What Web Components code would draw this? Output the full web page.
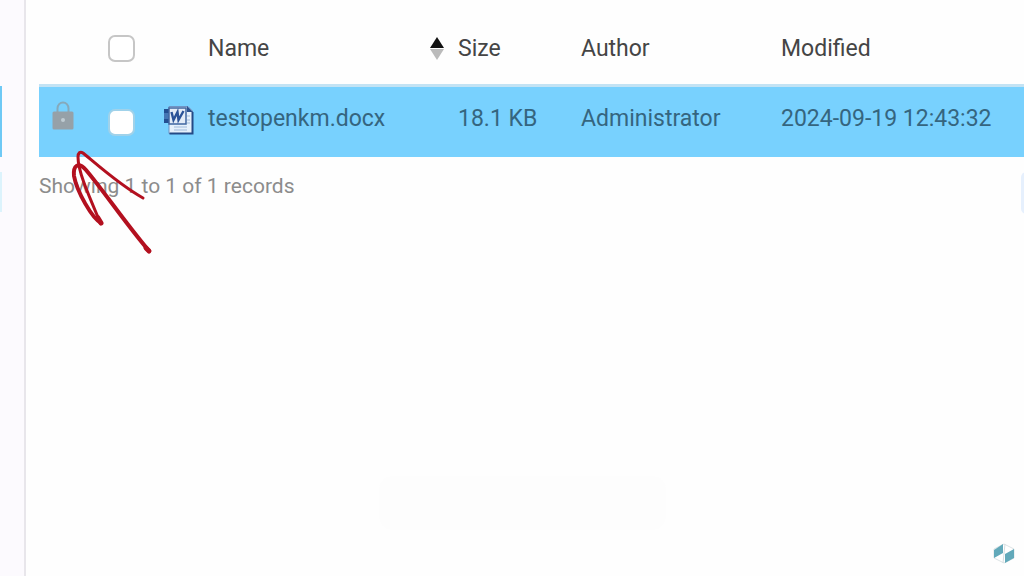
<!DOCTYPE html>
<html lang="en">
<head>
<meta charset="utf-8">
<title>Documents</title>
<style>
    body {
        margin: 0;
        background: #fefefe;
        font-family: Roboto, "Liberation Sans", sans-serif;
        overflow: hidden;
    }
</style>
</head>
<body>
<document-browser>
    <side-strip slot="side"></side-strip>
    <file-table></file-table>
    <records-info>Showing 1 to 1 of 1 records</records-info>
    <hand-arrow slot="overlay"></hand-arrow>
    <corner-logo slot="overlay"></corner-logo>
</document-browser>

<script>
class DocumentBrowser extends HTMLElement {
    constructor() {
        super();
        this.attachShadow({ mode: 'open' });
    }

    connectedCallback() {
        this.shadowRoot.innerHTML = `
            <style>
                :host {
                    display: flex;
                    position: relative;
                    min-height: 100vh;
                }
                main {
                    flex: 1;
                    min-width: 0;
                    padding-left: 13px;
                }
                .ghost {
                    position: absolute;
                    left: 37%;
                    bottom: 46px;
                    width: 28%;
                    height: 54px;
                    border-radius: 14px;
                    background: #fdfdfd;
                }
                .edge {
                    position: absolute;
                    top: 172px;
                    right: -8px;
                    width: 11px;
                    height: 42px;
                    border-radius: 6px;
                    background: #e6f0fd;
                }
            </style>
            <slot name="side"></slot>
            <main><slot></slot></main>
            <div class="ghost"></div>
            <div class="edge"></div>
            <slot name="overlay"></slot>
        `;
    }
}

class SideStrip extends HTMLElement {
    constructor() {
        super();
        this.attachShadow({ mode: 'open' });
    }

    connectedCallback() {
        this.shadowRoot.innerHTML = `
            <style>
                :host {
                    display: flex;
                    flex-direction: column;
                    gap: 15px;
                    box-sizing: border-box;
                    width: 26px;
                    padding-top: 86px;
                    background: #fcfafe;
                    border-right: 2px solid #e8e6eb;
                }
                .selected {
                    width: 2px;
                    height: 71px;
                    background: #6fc9f5;
                }
                .hint {
                    width: 2px;
                    height: 40px;
                    background: #dcf3fc;
                }
            </style>
            <div class="selected"></div>
            <div class="hint"></div>
        `;
    }
}

class LockIcon extends HTMLElement {
    constructor() {
        super();
        this.attachShadow({ mode: 'open' });
    }

    connectedCallback() {
        this.shadowRoot.innerHTML = `
            <style>
                :host { display: block; }
                svg { display: block; margin: 0 auto; }
            </style>
            <svg width="22" height="29" viewBox="0 0 22 29">
                <path d="M5.5 12V7.5C5.5 4 8 1.5 11 1.5S16.5 4 16.5 7.5V12" fill="none" stroke="#86a9bb" stroke-width="2"/>
                <rect x="0.5" y="10.5" width="21" height="18" rx="1.5" fill="#96a1a8"/>
                <circle cx="11" cy="19" r="2" fill="#c0ccd2"/>
            </svg>
        `;
    }
}

class WordIcon extends HTMLElement {
    constructor() {
        super();
        this.attachShadow({ mode: 'open' });
    }

    connectedCallback() {
        this.shadowRoot.innerHTML = `
            <style>
                :host { display: block; }
                svg { display: block; margin: 0 auto; }
            </style>
            <svg width="31" height="30" viewBox="0 0 31 30">
                <path d="M6 1.5H25L29.5 6V28.5H6z" fill="#e6f0fb" stroke="#6f93c4"/>
                <path d="M29.5 7V28.5H6.5" fill="none" stroke="#244a86" stroke-width="2"/>
                <path d="M24 1L30 7H24z" fill="#2c5290"/>
                <path d="M11 22H24M11 25H24M24 11H27M24 15H27M24 18H27" stroke="#9fb9da"/>
                <rect x="1" y="4" width="5" height="14" fill="#4476b5"/>
                <path d="M1 4H6V8H1zM1 14H6V18H1z" fill="#234f91"/>
                <rect x="6" y="3" width="17" height="16" fill="#e4ecf7" stroke="#3f65a0" stroke-width="1.5"/>
                <path d="M8.5 7L10.5 15L14.5 7L15.5 15L20.5 6" fill="none" stroke="#2b5398" stroke-width="2.4"/>
            </svg>
        `;
    }
}

class SortArrows extends HTMLElement {
    constructor() {
        super();
        this.attachShadow({ mode: 'open' });
    }

    connectedCallback() {
        this.shadowRoot.innerHTML = `
            <style>
                :host { display: block; }
                svg { display: block; }
            </style>
            <svg width="14" height="24" viewBox="0 0 14 24">
                <path d="M7 0L14 11H0z" fill="#111"/>
                <path d="M0 12H14L7 23z" fill="#bbb"/>
            </svg>
        `;
    }
}

class FileTable extends HTMLElement {
    constructor() {
        super();
        this.attachShadow({ mode: 'open' });
    }

    connectedCallback() {
        this.shadowRoot.innerHTML = `
            <style>
                :host {
                    display: block;
                }
                table {
                    width: 100%;
                    table-layout: fixed;
                    border-collapse: separate;
                    border-spacing: 0;
                    font-size: 23px;
                    line-height: 28px;
                    white-space: nowrap;
                }
                .lock { width: 48px; }
                .check { width: 69px; }
                .type { width: 44px; }
                .name { width: 250px; }
                .size { width: 123px; }
                .author { width: 200px; }
                th, td {
                    box-sizing: border-box;
                    padding: 0 0 0 8px;
                    text-align: left;
                    vertical-align: middle;
                }
                th {
                    height: 84px;
                    padding-top: 14px;
                    font-weight: 400;
                    color: #454545;
                }
                td {
                    height: 73px;
                    padding-bottom: 6px;
                    border-top: 3px solid #c3e3f4;
                    background: #78d1fe;
                    color: #35657f;
                }
                th.icon {
                    padding: 12px 0 0;
                }
                td.icon {
                    padding: 0 0 4px;
                }
                td.locked {
                    padding-bottom: 14px;
                }
                td.tick {
                    padding-bottom: 0;
                }
                .sortable {
                    display: flex;
                    align-items: center;
                    justify-content: space-between;
                    padding-right: 6px;
                }
                input {
                    appearance: none;
                    display: block;
                    box-sizing: border-box;
                    width: 27px;
                    height: 27px;
                    margin: 0 auto;
                    border: 2px solid #c6c6c6;
                    border-radius: 7px;
                    background: #fff;
                }
                td input {
                    border-color: #a0d2ea;
                }
            </style>
            <table>
                <colgroup>
                    <col class="lock"><col class="check"><col class="type"><col class="name">
                    <col class="size"><col class="author"><col>
                </colgroup>
                <thead>
                    <tr>
                        <th></th>
                        <th class="icon"><input type="checkbox" aria-label="Select all"></th>
                        <th></th>
                        <th><div class="sortable">Name<sort-arrows></sort-arrows></div></th>
                        <th>Size</th>
                        <th>Author</th>
                        <th>Modified</th>
                    </tr>
                </thead>
                <tbody>
                    <tr>
                        <td class="icon locked"><lock-icon></lock-icon></td>
                        <td class="icon tick"><input type="checkbox" aria-label="Select testopenkm.docx"></td>
                        <td class="icon"><word-icon></word-icon></td>
                        <td>testopenkm.docx</td>
                        <td>18.1 KB</td>
                        <td>Administrator</td>
                        <td>2024-09-19 12:43:32</td>
                    </tr>
                </tbody>
            </table>
        `;
    }
}

class RecordsInfo extends HTMLElement {
    constructor() {
        super();
        this.attachShadow({ mode: 'open' });
    }

    connectedCallback() {
        this.shadowRoot.innerHTML = `
            <style>
                :host {
                    display: block;
                    padding-top: 15px;
                    font-size: 21px;
                    line-height: 28px;
                    color: #8c8c8c;
                }
            </style>
            <slot></slot>
        `;
    }
}

class HandArrow extends HTMLElement {
    constructor() {
        super();
        this.attachShadow({ mode: 'open' });
    }

    connectedCallback() {
        // scribbled pointer laid over the table, tip just under the lock
        this.shadowRoot.innerHTML = `
            <style>
                :host {
                    position: absolute;
                    left: 68px;
                    top: 148px;
                    pointer-events: none;
                }
                svg { display: block; }
            </style>
            <svg width="88" height="110" viewBox="0 0 88 110" fill="none" stroke="#b3101f" stroke-linecap="round" stroke-linejoin="round">
                <path d="M75 50C53 38 33 20 15 5C12 3 10 5 10 9C10 24 21 48 32 74" stroke-width="3"/>
                <path d="M33 75C24 70 9 44 6 28C5 18 10 13 18 22C35 42 55 72 81 103" stroke-width="4"/>
                <path d="M30 70L33 75M78 100L81 103" stroke-width="5"/>
            </svg>
        `;
    }
}

class CornerLogo extends HTMLElement {
    constructor() {
        super();
        this.attachShadow({ mode: 'open' });
    }

    connectedCallback() {
        this.shadowRoot.innerHTML = `
            <style>
                :host {
                    position: absolute;
                    right: 9px;
                    bottom: 12px;
                }
                svg { display: block; }
            </style>
            <svg width="22" height="21" viewBox="0 0 22 21">
                <path d="M1 6L11 1L21 6V15L11 20L1 15z" fill="#fff" stroke="#dce3e5"/>
                <path d="M1 7L10 1V10L1 15z" fill="#62a9ba"/>
                <path d="M12 11L21 6V15L12 20z" fill="#62a9ba"/>
                <path d="M12 1L10 20" stroke="#d5dee1"/>
            </svg>
        `;
    }
}

customElements.define('lock-icon', LockIcon);
customElements.define('word-icon', WordIcon);
customElements.define('sort-arrows', SortArrows);
customElements.define('side-strip', SideStrip);
customElements.define('file-table', FileTable);
customElements.define('records-info', RecordsInfo);
customElements.define('hand-arrow', HandArrow);
customElements.define('corner-logo', CornerLogo);
customElements.define('document-browser', DocumentBrowser);
</script>
</body>
</html>
